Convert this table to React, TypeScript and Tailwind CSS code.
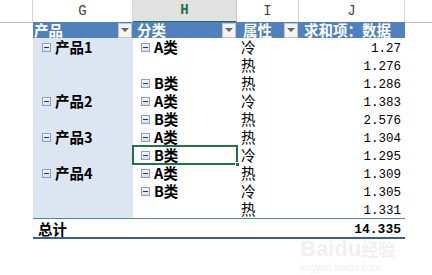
import { ReactNode } from "react";

type Row = { g?: string; h?: string; i: string; j: string; sel?: boolean };

const rows: Row[] = [
  { g: "产品1", h: "A类", i: "冷", j: "1.27" },
  { i: "热", j: "1.276" },
  { h: "B类", i: "热", j: "1.286" },
  { g: "产品2", h: "A类", i: "冷", j: "1.383" },
  { h: "B类", i: "热", j: "2.576" },
  { g: "产品3", h: "A类", i: "热", j: "1.304" },
  { h: "B类", i: "冷", j: "1.295", sel: true },
  { g: "产品4", h: "A类", i: "热", j: "1.309" },
  { h: "B类", i: "冷", j: "1.305" },
  { i: "热", j: "1.331" },
];

const cjk = "font-['SimSun','Noto_Sans_CJK_SC',sans-serif]";
const mono = "font-['Liberation_Mono','Noto_Sans_CJK_SC',monospace]";

function Collapse() {
  return (
    <span className="mr-[4px] flex h-[9px] w-[9px] shrink-0 items-center justify-center border border-[#8aa0bd] bg-gradient-to-b from-[#f4f7fb] to-[#d5dfec]">
      <span className="h-[1px] w-[5px] bg-[#1f3a5f]" />
    </span>
  );
}

function Dropdown() {
  return (
    <span className="ml-auto mr-[1px] flex h-[15px] w-[14px] items-center justify-center border border-[#c4c4c4] bg-[#f3f3f3]">
      <span className="h-0 w-0 border-x-[4px] border-t-[4px] border-x-transparent border-t-[#666]" />
    </span>
  );
}

function ColHead({ children, active }: { children?: ReactNode; active?: boolean }) {
  return (
    <div
      className={
        active
          ? `flex items-center justify-center border-r border-[#c6c6c6] border-b-2 border-b-[#217346] bg-[#e1e1e1] text-[#217346] font-bold ${mono} text-[14px]`
          : `flex items-center justify-center border-r border-[#d4d4d4] border-b border-b-[#bcbcbc] bg-white text-[#444] ${mono} text-[14px]`
      }
    >
      {children}
    </div>
  );
}

export default function App() {
  return (
    <div className="relative h-[275px] w-[432px] overflow-hidden bg-white">
      {/* column letters */}
      <div className="grid h-[22px] grid-cols-[33px_100px_104px_62px_106px_1fr]">
        <ColHead />
        <ColHead>G</ColHead>
        <ColHead active>H</ColHead>
        <ColHead>I</ColHead>
        <ColHead>J</ColHead>
        <div className="border-b border-b-[#bcbcbc]" />
      </div>

      {/* pivot header */}
      <div className={`grid h-[16px] grid-cols-[33px_100px_104px_62px_106px_1fr] text-[14.5px] font-bold leading-none text-white ${cjk}`}>
        <div />
        <div className="flex items-center bg-[#4f81bd] pl-[1px]">
          产品
          <Dropdown />
        </div>
        <div className="flex items-center bg-[#4f81bd] pl-[4px]">
          分类
          <Dropdown />
        </div>
        <div className="flex items-center bg-[#4f81bd] pl-[6px]">
          属性
          <Dropdown />
        </div>
        <div className="flex items-center bg-[#4f81bd] pl-[5px]">求和项：数据</div>
        <div />
      </div>

      {/* body */}
      {rows.map((r, k) => (
        <div key={k} className="grid h-[18px] grid-cols-[33px_100px_104px_62px_106px_1fr] leading-none">
          <div />
          <div className={`flex items-end bg-[#dce6f1] pb-[2px] pl-[9px] text-[14.5px] font-bold text-black ${cjk}`}>
            {r.g && (
              <>
                <span className="mb-[2px]">
                  <Collapse />
                </span>
                {r.g}
              </>
            )}
          </div>
          <div
            className={`relative flex items-end pb-[2px] pl-[8px] text-[14.5px] font-bold text-black ${cjk} ${
              r.sel ? "outline-2 -outline-offset-1 outline-[#217346]" : ""
            }`}
          >
            {r.h && (
              <>
                <span className="mb-[2px]">
                  <Collapse />
                </span>
                {r.h}
              </>
            )}
            {r.sel && (
              <span className="absolute -bottom-[3px] -right-[3px] h-[5px] w-[5px] border border-white bg-[#217346]" />
            )}
          </div>
          <div className={`flex items-end pb-[2px] pl-[4px] text-[14.5px] text-black ${cjk}`}>{r.i}</div>
          <div className={`flex items-end justify-end pb-[1px] pr-[4px] text-[12.5px] text-black ${mono}`}>{r.j}</div>
          <div />
        </div>
      ))}

      {/* total */}
      <div className="grid h-[21px] grid-cols-[33px_100px_104px_62px_106px_1fr] leading-none">
        <div />
        <div className={`col-span-4 flex items-end border-t border-t-[#4f81bd] border-b-2 border-b-[#366092] pb-[1px] text-[14.5px] font-bold text-black ${cjk}`}>
          <span className="pl-[5px]">总计</span>
          <span className={`ml-auto pr-[4px] text-[13px] ${mono}`}>14.335</span>
        </div>
        <div />
      </div>

      {/* watermark */}
      <div className="pointer-events-none absolute left-[300px] top-[238px] select-none text-[#e6e6e6]/60">
        <div className="font-['Liberation_Sans','Noto_Sans_CJK_SC',sans-serif] text-[22px] font-bold leading-none">
          Baidu<span className="text-[17px]">经验</span>
        </div>
        <div className="mt-[3px] font-['Liberation_Sans',sans-serif] text-[10px] leading-none">jingyan.baidu.com</div>
      </div>
    </div>
  );
}
